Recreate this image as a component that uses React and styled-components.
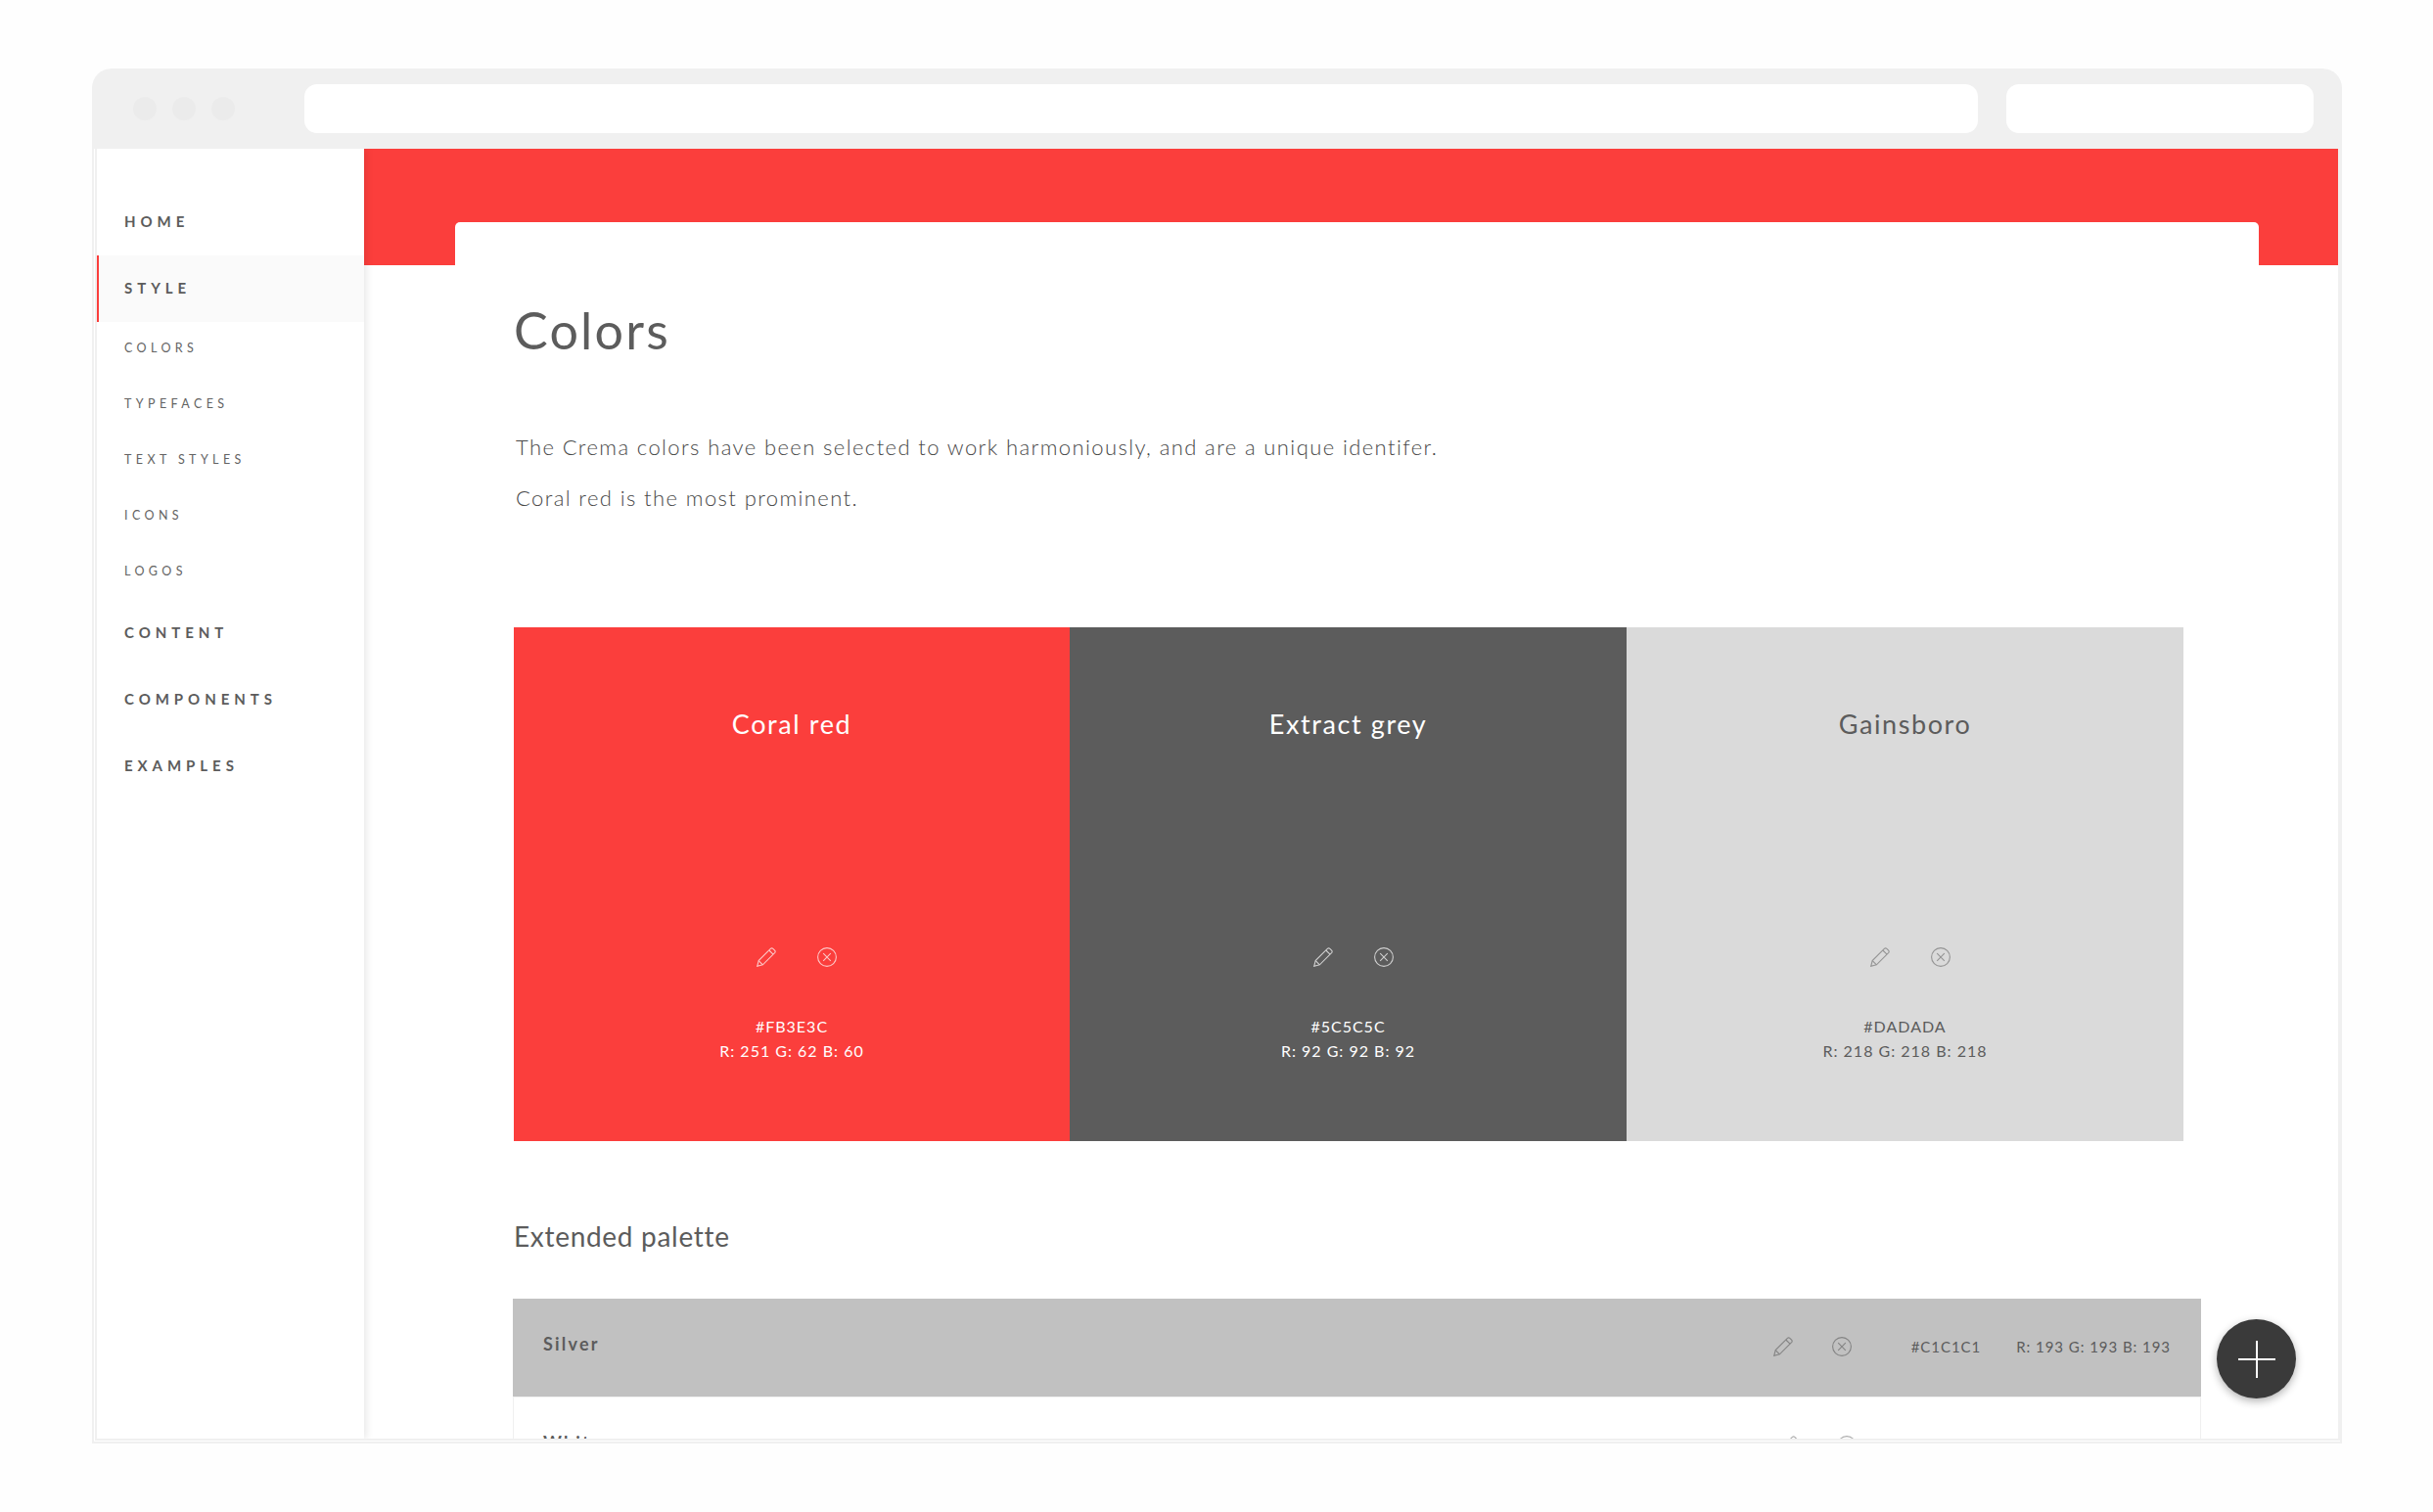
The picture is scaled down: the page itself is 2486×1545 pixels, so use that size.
import React from "react";
import styled, { createGlobalStyle } from "styled-components";

const Global = createGlobalStyle`
  html, body { margin: 0; padding: 0; background: #fefefe; }
  body { font-family: "Lato", "Open Sans", sans-serif; color: #5c5c5c; -webkit-font-smoothing: antialiased; }
  * { box-sizing: border-box; }
`;

const Page = styled.div`
  width: 2486px;
  height: 1545px;
  padding: 70px 93px 0 94px;
  overflow: hidden;
`;
const Frame = styled.div`
  display: flex;
  flex-direction: column;
  height: 1405px;
`;
const Toolbar = styled.div`
  display: flex;
  align-items: center;
  height: 82px;
  flex: none;
  padding: 0 29px 0 42px;
  background: #f0f0f0;
  border-radius: 20px 20px 0 0;
`;
const Dots = styled.div`
  display: flex;
  gap: 16px;
  margin-right: 71px;
`;
const Dot = styled.span`
  width: 24px;
  height: 24px;
  border-radius: 50%;
  background: #ebebeb;
`;
const Field = styled.div`
  height: 50px;
  border-radius: 13px;
  background: #fff;
  width: ${(p) => p.$w}px;
  margin-right: ${(p) => p.$gap || 0}px;
`;
const Body = styled.div`
  position: relative;
  flex: 1;
  min-height: 0;
  display: flex;
  overflow: hidden;
  background: #fff;
  border-left: 5px double #f0f0f0;
  border-bottom: 5px double #f0f0f0;
  border-right: 4px solid #f0f0f0;
`;
const Sidebar = styled.nav`
  position: relative;
  z-index: 1;
  flex: none;
  width: 273px;
  padding-top: 41px;
  background: #fff;
  box-shadow: 2px 0 8px rgba(0, 0, 0, 0.1);
`;
const NavItem = styled.div`
  display: flex;
  align-items: center;
  height: 68px;
  padding-left: ${(p) => (p.$active ? 26 : 28)}px;
  padding-bottom: 2px;
  background: ${(p) => (p.$active ? "#fafafa" : "transparent")};
  border-left: ${(p) => (p.$active ? "2px solid #fb3e3c" : "0")};
  font-size: 15px;
  font-weight: 700;
  letter-spacing: 4.95px;
  color: #5c5c5c;
`;
const SubList = styled.div`
  margin: -2px 0 1px;
`;
const SubItem = styled.div`
  display: flex;
  align-items: center;
  height: 57px;
  padding-left: 28px;
  font-size: 12.5px;
  font-weight: 400;
  letter-spacing: 4.4px;
  color: #636363;
`;
const Main = styled.main`
  flex: 1;
  min-width: 0;
`;
const Band = styled.div`
  height: 119px;
  padding: 75px 81px 0 93px;
  background: #fb3e3c;
`;
const Tab = styled.div`
  height: 44px;
  background: #fff;
  border-radius: 5px 5px 0 0;
`;
const Content = styled.div`
  padding: 36px 140px 0 153px;
`;
const Title = styled.h1`
  margin: 0;
  font-size: 52px;
  line-height: 60px;
  font-weight: 400;
  letter-spacing: 2.2px;
  color: #5c5c5c;
`;
const Intro = styled.div`
  margin: 64px 0 106px 2px;
`;
const IntroLine = styled.p`
  margin: 0;
  height: 52px;
  font-size: 22px;
  line-height: 52px;
  font-weight: 300;
  letter-spacing: 1.4px;
  color: #484848;
`;
const Swatches = styled.div`
  display: grid;
  grid-template-columns: 568px 569px 569px;
  height: 525px;
`;
const Swatch = styled.div`
  display: flex;
  flex-direction: column;
  align-items: center;
  padding-top: 79px;
  background: ${(p) => p.$bg};
  color: ${(p) => p.$fg};
`;
const SwatchName = styled.div`
  font-size: 27px;
  line-height: 40px;
  letter-spacing: 1.6px;
`;
const Actions = styled.div`
  display: flex;
  gap: ${(p) => p.$gap}px;
  color: inherit;
`;
const SwatchActions = styled(Actions)`
  margin: 208px 0 48px 10px;
`;
const Icon = styled.svg`
  display: block;
  width: 20px;
  height: 20px;
  fill: none;
  stroke: currentColor;
  stroke-width: 1.1;
  opacity: ${(p) => p.$o};
`;
const Code = styled.div`
  font-size: 16px;
  line-height: 25px;
  letter-spacing: 1px;
  white-space: nowrap;
`;
const Heading = styled.h2`
  margin: 77px 0 44px;
  font-size: 28px;
  line-height: 40px;
  font-weight: 400;
  letter-spacing: 0.7px;
  color: #5c5c5c;
`;
const Table = styled.div`
  width: 1725px;
  margin-left: -1px;
`;
const Row = styled.div`
  display: flex;
  align-items: center;
  height: 101px;
  padding: 0 31px 2px 31px;
  background: ${(p) => p.$bg};
  border-bottom: 1px solid #f0f0f0;
  ${(p) => (p.$plain ? "box-shadow: inset 1px 0 #f0f0f0, inset -1px 0 #f0f0f0;" : "")}
`;
const RowName = styled.div`
  flex: 1;
  margin-bottom: 6px;
  font-size: 18px;
  font-weight: 700;
  letter-spacing: 2.2px;
  color: #5c5c5c;
`;
const RowActions = styled(Actions)`
  color: #5c5c5c;
  margin-right: 61px;
`;
const RowCode = styled(Code)`
  font-size: 15px;
  letter-spacing: 0.95px;
  color: ${(p) => p.$c};
  margin-left: ${(p) => p.$ml || 0}px;
`;
const Fab = styled.button`
  position: absolute;
  right: 43px;
  bottom: 41px;
  z-index: 2;
  display: flex;
  align-items: center;
  justify-content: center;
  width: 81px;
  height: 81px;
  padding: 0;
  border: 0;
  border-radius: 50%;
  background: #3a3a3a;
  color: #fff;
  box-shadow: 0 3px 8px rgba(0, 0, 0, 0.3);
`;

const Pencil = ({ o }) => (
  <Icon viewBox="0 0 20 20" $o={o}>
    <path d="M.7 19.3 2.2 13.6 14.4 1.4Q15.6.3 16.8 1.4L18.6 3.2Q19.7 4.4 18.6 5.6L6.4 17.8Z" />
    <path d="M2.2 13.6 6.4 17.8M12.8 3 17 7.2" />
  </Icon>
);
const Remove = ({ o }) => (
  <Icon viewBox="0 0 20 20" $o={o}>
    <circle cx="10" cy="10" r="9.4" />
    <path d="M6.2 6.2 13.8 13.8M13.8 6.2 6.2 13.8" />
  </Icon>
);

const swatches = [
  { name: "Coral red", bg: "#fb3e3c", fg: "#ffffff", hex: "#FB3E3C", rgb: "R: 251 G: 62 B: 60", o: 0.7 },
  { name: "Extract grey", bg: "#5c5c5c", fg: "#ffffff", hex: "#5C5C5C", rgb: "R: 92 G: 92 B: 92", o: 0.7 },
  { name: "Gainsboro", bg: "#dadada", fg: "#5c5c5c", hex: "#DADADA", rgb: "R: 218 G: 218 B: 218", o: 0.55 },
];
const rows = [
  { name: "Silver", bg: "#c1c1c1", hex: "#C1C1C1", rgb: "R: 193 G: 193 B: 193", c: "#5c5c5c", o: 0.6 },
  { name: "White", bg: "#ffffff", hex: "#FFFFFF", rgb: "R: 255 G: 255 B: 255", c: "#c4c4c4", o: 0.5, plain: true },
];

export default function App() {
  return (
    <Page>
      <Global />
      <Frame>
        <Toolbar>
          <Dots>
            <Dot />
            <Dot />
            <Dot />
          </Dots>
          <Field $w={1710} $gap={29} />
          <Field $w={314} />
        </Toolbar>
        <Body>
          <Sidebar>
            <NavItem>HOME</NavItem>
            <NavItem $active>STYLE</NavItem>
            <SubList>
              <SubItem>COLORS</SubItem>
              <SubItem>TYPEFACES</SubItem>
              <SubItem>TEXT STYLES</SubItem>
              <SubItem>ICONS</SubItem>
              <SubItem>LOGOS</SubItem>
            </SubList>
            <NavItem>CONTENT</NavItem>
            <NavItem>COMPONENTS</NavItem>
            <NavItem>EXAMPLES</NavItem>
          </Sidebar>
          <Main>
            <Band>
              <Tab />
            </Band>
            <Content>
              <Title>Colors</Title>
              <Intro>
                <IntroLine>The Crema colors have been selected to work harmoniously, and are a unique identifer.</IntroLine>
                <IntroLine>Coral red is the most prominent.</IntroLine>
              </Intro>
              <Swatches>
                {swatches.map((s) => (
                  <Swatch key={s.name} $bg={s.bg} $fg={s.fg}>
                    <SwatchName>{s.name}</SwatchName>
                    <SwatchActions $gap={42}>
                      <Pencil o={s.o} />
                      <Remove o={s.o} />
                    </SwatchActions>
                    <Code>{s.hex}</Code>
                    <Code>{s.rgb}</Code>
                  </Swatch>
                ))}
              </Swatches>
              <Heading>Extended palette</Heading>
              <Table>
                {rows.map((r) => (
                  <Row key={r.name} $bg={r.bg} $plain={r.plain}>
                    <RowName>{r.name}</RowName>
                    <RowActions $gap={40}>
                      <Pencil o={r.o} />
                      <Remove o={r.o} />
                    </RowActions>
                    <RowCode $c={r.c}>{r.hex}</RowCode>
                    <RowCode $c={r.c} $ml={36}>{r.rgb}</RowCode>
                  </Row>
                ))}
              </Table>
            </Content>
          </Main>
          <Fab aria-label="Add">
            <svg width="38" height="38" viewBox="0 0 38 38" stroke="currentColor" strokeWidth="2">
              <path d="M0 19H38M19 0V38" />
            </svg>
          </Fab>
        </Body>
      </Frame>
    </Page>
  );
}
